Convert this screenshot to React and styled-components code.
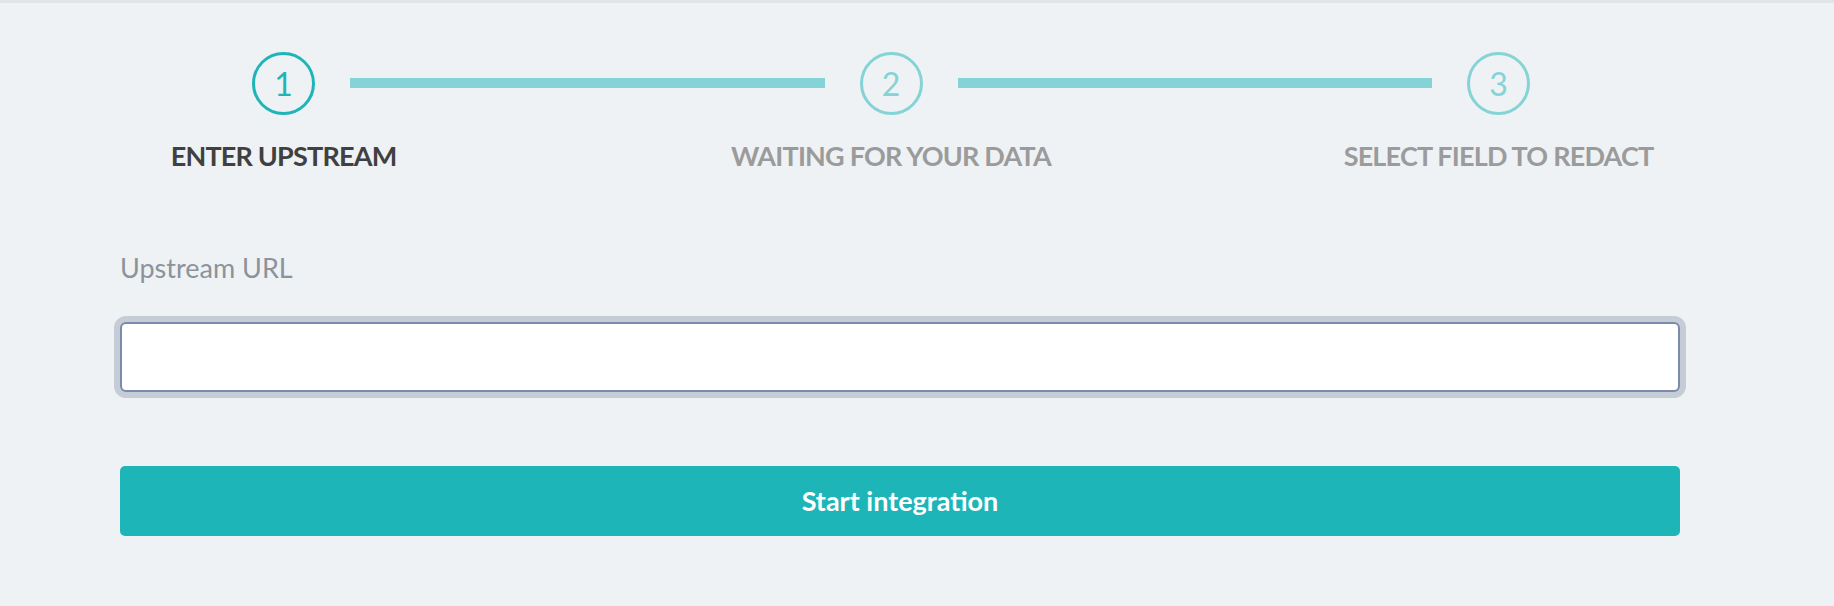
import React from "react";
import styled, { createGlobalStyle } from "styled-components";

const GlobalStyle = createGlobalStyle`
  html, body {
    margin: 0;
    padding: 0;
    background: #eef2f5;
    font-family: Lato, "Open Sans", sans-serif;
  }
  * { box-sizing: border-box; }
`;

const Page = styled.div`
  border-top: 3px solid #e2e5e8;
  padding: 49px 154px 70px 120px;
  min-height: 606px;
  background: #eef2f5;
`;

const Stepper = styled.div`
  display: flex;
  align-items: flex-start;
  margin: 0 150px 0 132px;
`;

const Step = styled.div`
  flex: none;
  width: 63px;
  display: flex;
  flex-direction: column;
  align-items: center;
`;

const Circle = styled.div`
  width: 63px;
  height: 63px;
  border-radius: 50%;
  border: 3px solid ${(p) => (p.$active ? "#1fb5b8" : "#84d3d6")};
  color: ${(p) => (p.$active ? "#1fb5b8" : "#84d3d6")};
  display: flex;
  align-items: center;
  justify-content: center;
  font-size: 32px;
  font-weight: 400;
  line-height: 1;
  padding-top: 1px;
`;

const StepLabel = styled.div`
  margin-top: 25px;
  white-space: nowrap;
  font-size: 27px;
  font-weight: 700;
  line-height: 1.2;
  letter-spacing: -0.8px;
  text-transform: uppercase;
  color: ${(p) => (p.$active ? "#404040" : "#9b9b9b")};
`;

const Connector = styled.div`
  flex: 1;
  height: 10px;
  margin: 26px 35px 0;
  background: #84d3d6;
`;

const Field = styled.div`
  margin-top: 80px;
`;

const FieldLabel = styled.label`
  display: block;
  font-size: 27px;
  font-weight: 400;
  line-height: 1.2;
  color: #8c939b;
`;

const Input = styled.input`
  display: block;
  width: 100%;
  height: 70px;
  margin-top: 37px;
  border: 2px solid #7b8bab;
  border-radius: 6px;
  box-shadow: 0 0 0 6px #c5ccd5;
  background: #fff;
  outline: none;
  font-family: inherit;
  font-size: 24px;
  padding: 0 16px;
`;

const Button = styled.button`
  display: block;
  width: 100%;
  height: 70px;
  margin-top: 74px;
  border: none;
  border-radius: 5px;
  background: #1eb5b8;
  color: #fff;
  font-family: inherit;
  font-size: 27px;
  font-weight: 700;
  cursor: pointer;
`;

const steps = [
  { n: 1, label: "Enter upstream", active: true },
  { n: 2, label: "Waiting for your data" },
  { n: 3, label: "Select field to redact" },
];

export default function App() {
  return (
    <>
      <GlobalStyle />
      <Page>
        <Stepper>
          {steps.map((s, i) => (
            <React.Fragment key={s.n}>
              {i > 0 && <Connector />}
              <Step>
                <Circle $active={s.active}>{s.n}</Circle>
                <StepLabel $active={s.active}>{s.label}</StepLabel>
              </Step>
            </React.Fragment>
          ))}
        </Stepper>
        <Field>
          <FieldLabel htmlFor="upstream">Upstream URL</FieldLabel>
          <Input id="upstream" type="text" />
        </Field>
        <Button>Start integration</Button>
      </Page>
    </>
  );
}
